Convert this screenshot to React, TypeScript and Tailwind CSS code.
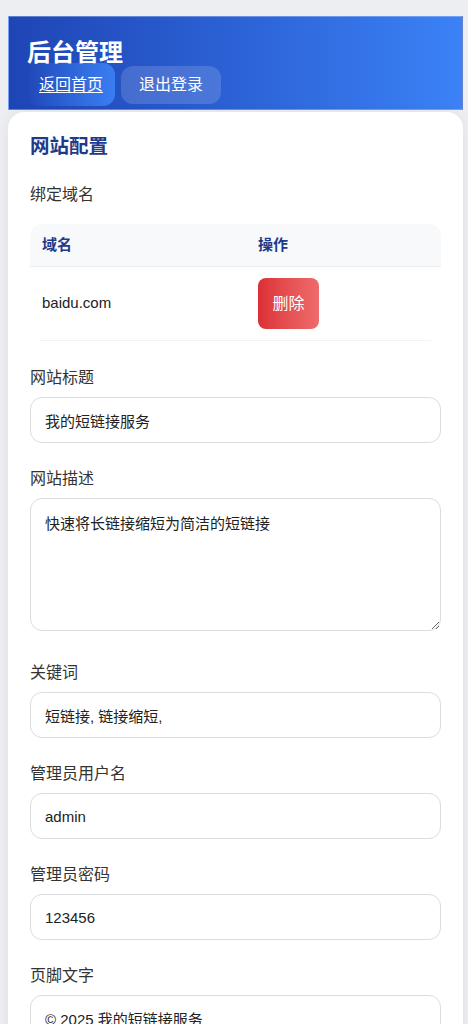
import React from "react";

const fields = [
  { label: "网站标题", value: "我的短链接服务" },
];

const lowerFields = [
  { label: "关键词", value: "短链接, 链接缩短," },
  { label: "管理员用户名", value: "admin" },
  { label: "管理员密码", value: "123456" },
  { label: "页脚文字", value: "© 2025 我的短链接服务" },
];

function Field({ label, value }: { label: string; value: string }) {
  return (
    <div className="mb-[25px]">
      <label className="block text-[16px] leading-[22px] text-[#333] mb-2">{label}</label>
      <input
        defaultValue={value}
        className="block w-full h-[46px] px-[14px] text-[15px] text-[#222] border border-[#dcdcdf] rounded-xl bg-white outline-none"
      />
    </div>
  );
}

function AdminHeader() {
  return (
    <header className="ml-2 mr-[5px] mt-4 h-[94px] pt-[21px] px-[18px] bg-gradient-to-r from-[#1f45b5] via-[#2c62d6] to-[#3b82f6] border border-[#c7d4f3]/40">
      <h1 className="text-[24px] leading-[30px] font-bold text-white">后台管理</h1>
      <div className="flex items-center gap-[6px] -mt-[5px]">
        <a
          href="#"
          className="h-[43px] flex items-center px-3 rounded-xl text-[16px] text-white underline underline-offset-2 bg-gradient-to-r from-transparent to-[#3b82f6]/90"
        >
          返回首页
        </a>
        <button className="h-[38px] px-[18px] rounded-xl text-[16px] text-white bg-white/15">
          退出登录
        </button>
      </div>
    </header>
  );
}

function DomainTable() {
  return (
    <div className="mb-[26px]">
      <div className="grid grid-cols-[216px_1fr] h-[43px] items-center bg-[#f8f9fb] rounded-t-xl border-b border-[#eceef2]">
        <span className="pl-3 text-[15px] font-bold text-[#1e3a8a]">域名</span>
        <span className="pl-3 text-[15px] font-bold text-[#1e3a8a]">操作</span>
      </div>
      <div className="grid grid-cols-[216px_1fr] h-[74px] items-center mx-[10px] border-b border-[#f1f2f4]">
        <span className="pl-[2px] text-[15px] text-[#222]">baidu.com</span>
        <div className="pl-[2px]">
          <button className="h-[51px] w-[61px] rounded-lg text-[16px] text-white bg-gradient-to-r from-[#dc2f35] to-[#ee6b6d]">
            删除
          </button>
        </div>
      </div>
    </div>
  );
}

export default function App() {
  return (
    <div
      className="min-h-screen bg-[#eceef1] overflow-hidden"
      style={{ fontFamily: '"Liberation Sans", "Noto Sans CJK SC", sans-serif' }}
    >
      <AdminHeader />
      <main className="ml-2 mr-[5px] mt-[2px] bg-white rounded-t-2xl shadow-[0_0_12px_rgba(0,0,0,0.06)] px-[22px] pt-[21px] pb-8">
        <h2 className="text-[19.5px] leading-[27px] font-bold text-[#1e3a8a] mb-6">网站配置</h2>

        <label className="block text-[16px] leading-[22px] text-[#333] mb-[18px]">绑定域名</label>
        <DomainTable />

        {fields.map((f) => (
          <Field key={f.label} {...f} />
        ))}

        <div className="mb-[31px]">
          <label className="block text-[16px] leading-[22px] text-[#333] mb-2">网站描述</label>
          <textarea
            defaultValue="快速将长链接缩短为简洁的短链接"
            className="block w-full h-[133px] px-[14px] py-[14px] text-[15px] leading-[22px] text-[#222] border border-[#dcdcdf] rounded-xl bg-white outline-none"
          />
        </div>

        {lowerFields.map((f) => (
          <Field key={f.label} {...f} />
        ))}
      </main>
    </div>
  );
}
